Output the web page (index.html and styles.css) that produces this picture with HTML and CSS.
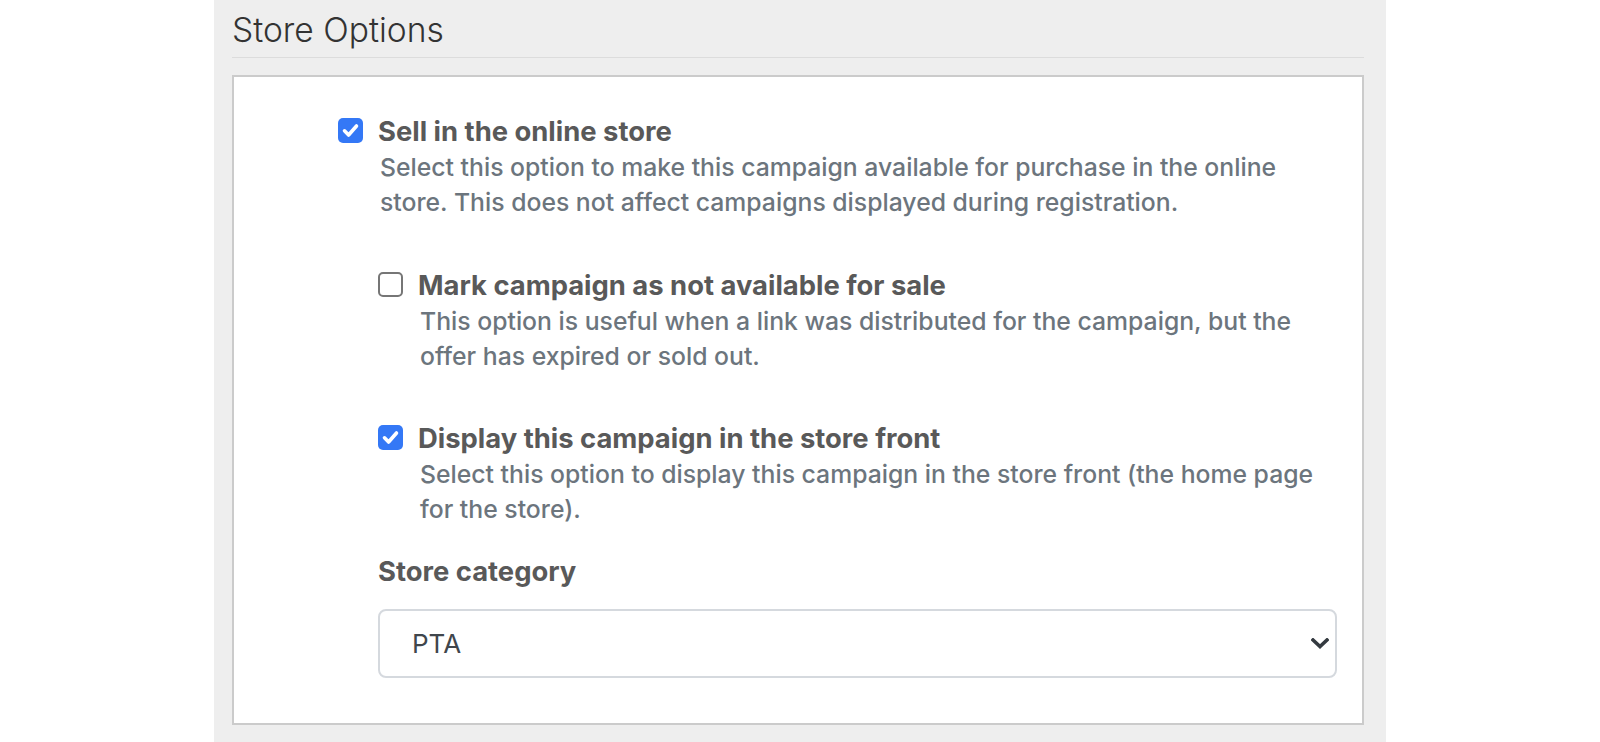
FILE: index.html
```html
<!DOCTYPE html>
<html lang="en">
<head>
<meta charset="utf-8">
<title>Store Options</title>
<link rel="stylesheet" href="styles.css">
</head>
<body>
<div class="page">
  <h2 class="section-title">Store Options</h2>
  <div class="panel">
    <div class="check-row">
      <span class="box checked"><svg viewBox="0 0 25 25" width="25" height="25"><polyline points="6.5,12.8 10.6,17 18.5,8" fill="none" stroke="#fff" stroke-width="3.6" stroke-linecap="round" stroke-linejoin="round"/></svg></span>
      <div class="check-text">
        <div class="check-label">Sell in the online store</div>
        <div class="check-help">Select this option to make this campaign available for purchase in the online store. This does not affect campaigns displayed during registration.</div>
      </div>
    </div>
    <div class="nested">
      <div class="check-row row-2">
        <span class="box"></span>
        <div class="check-text">
          <div class="check-label">Mark campaign as not available for sale</div>
          <div class="check-help">This option is useful when a link was distributed for the campaign, but the offer has expired or sold out.</div>
        </div>
      </div>
      <div class="check-row row-3">
        <span class="box checked"><svg viewBox="0 0 25 25" width="25" height="25"><polyline points="6.5,12.8 10.6,17 18.5,8" fill="none" stroke="#fff" stroke-width="3.6" stroke-linecap="round" stroke-linejoin="round"/></svg></span>
        <div class="check-text">
          <div class="check-label">Display this campaign in the store front</div>
          <div class="check-help">Select this option to display this campaign in the store front (the home page for the store).</div>
        </div>
      </div>
      <div class="field-label">Store category</div>
      <div class="select-wrap">
        <select class="select"><option>PTA</option></select>
        <svg class="chevron" viewBox="0 0 18 11" width="18" height="11"><polyline points="2,2 9,8.5 16,2" fill="none" stroke="#343a40" stroke-width="3.6" stroke-linecap="square"/></svg>
      </div>
    </div>
  </div>
</div>
</body>
</html>
```

FILE: styles.css
```css
html, body {
  margin: 0;
  padding: 0;
  background: #ffffff;
}
body {
  font-family: Inter, "Liberation Sans", sans-serif;
}
.page {
  width: 1132px;
  margin: 0 auto;
  padding: 0 22px 0 18px;
  min-height: 742px;
  background: #eeeeee;
  box-sizing: content-box;
}
.section-title {
  margin: 0;
  padding-top: 11px;
  height: 58px;
  box-sizing: border-box;
  font-family: Inter, "Liberation Sans", sans-serif;
  font-weight: 300;
  font-size: 33.6px;
  line-height: 38px;
  color: #333333;
  border-bottom: 1px solid #dcdcdc;
}
.panel {
  margin-top: 17px;
  background: #ffffff;
  border: 2px solid #cbcbcb;
  padding: 36px 25px 45px 104px;
}
.check-row {
  display: flex;
  align-items: flex-start;
}
.box {
  flex: none;
  width: 25px;
  height: 25px;
  margin-top: 5px;
  margin-right: 15px;
  box-sizing: border-box;
  border: 2px solid #767676;
  border-radius: 5px;
  background: #fff;
}
.box.checked {
  border: none;
  background: #3478f6;
}
.box svg {
  display: block;
}
.check-label {
  font-size: 27.4px;
  font-weight: 700;
  line-height: 36px;
  color: #595959;
}
.check-help {
  padding-top: 1px;
  font-size: 24.75px;
  font-weight: 500;
  line-height: 35px;
  color: #6c757d;
  margin-left: 2px;
}
.nested {
  padding-left: 40px;
}
.row-2 {
  margin-top: 47px;
}
.row-3 {
  margin-top: 46px;
}
.field-label {
  margin-top: 26px;
  font-size: 27.4px;
  font-weight: 700;
  line-height: 36px;
  color: #595959;
}
.select-wrap {
  position: relative;
  margin-top: 20px;
}
.select {
  display: block;
  width: 100%;
  height: 69px;
  appearance: none;
  -webkit-appearance: none;
  background: #ffffff;
  border: 2px solid #d5d9de;
  border-radius: 8px;
  padding: 0 0 0 32px;
  font-family: Inter, "Liberation Sans", sans-serif;
  font-size: 26px;
  color: #40464c;
}
.chevron {
  position: absolute;
  right: 8px;
  top: 29px;
}
```
